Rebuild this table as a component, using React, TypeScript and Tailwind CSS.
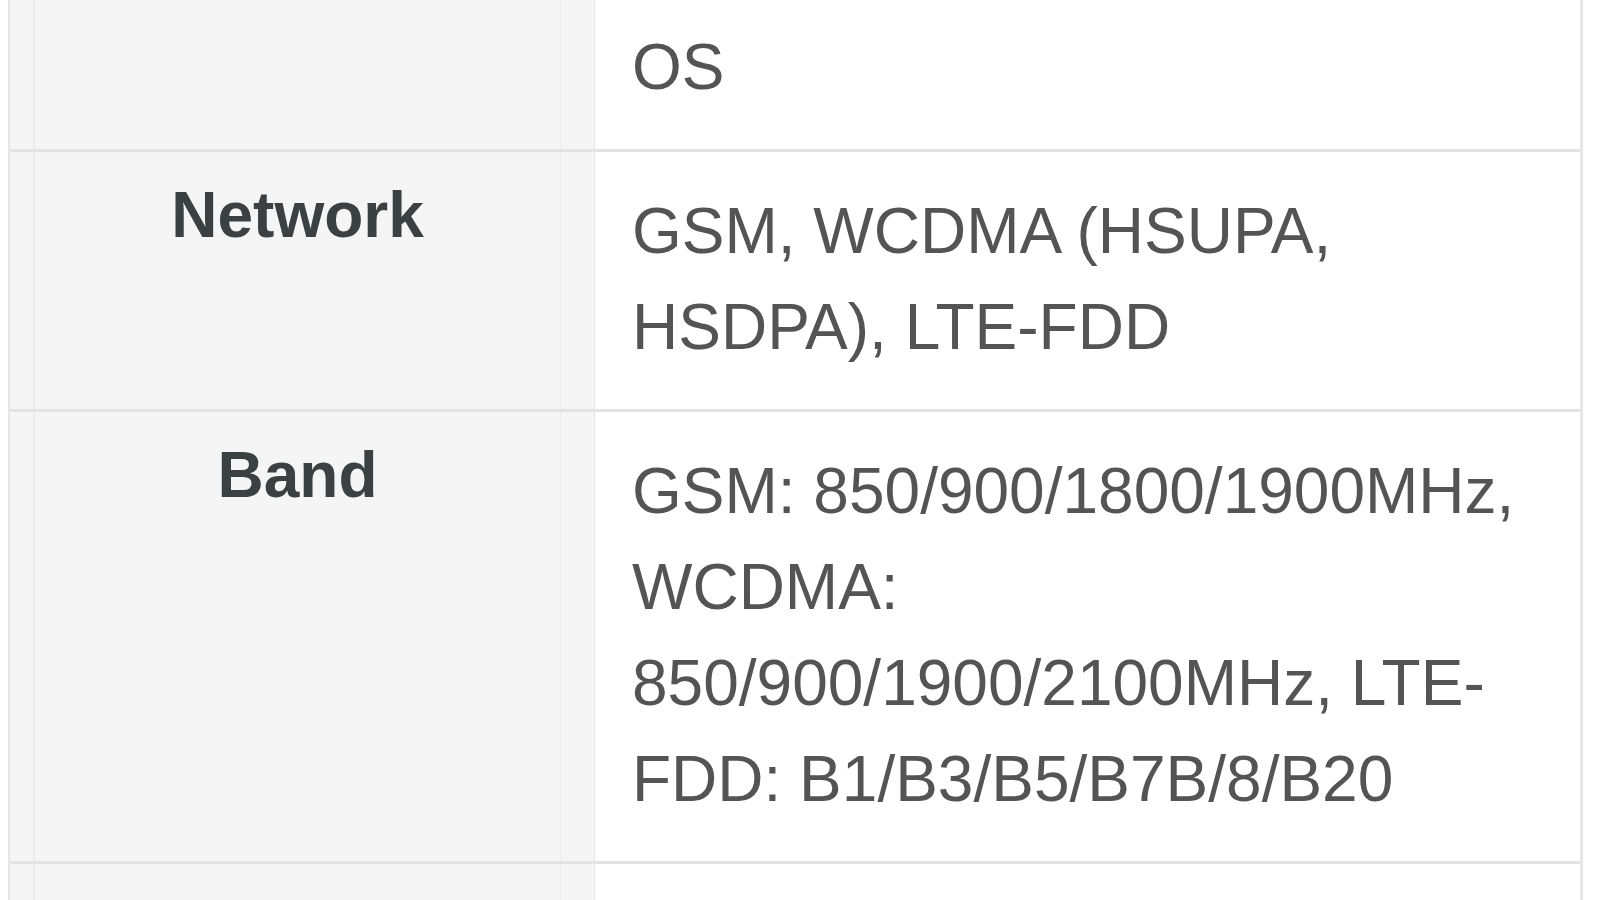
const specs = [
  {
    label: "OS",
    value: "Android 9.0 based on Funtouch OS",
  },
  {
    label: "Network",
    value: "GSM, WCDMA (HSUPA, HSDPA), LTE-FDD",
  },
  {
    label: "Band",
    value:
      "GSM: 850/900/1800/1900MHz, WCDMA: 850/900/1900/2100MHz, LTE-FDD: B1/B3/B5/B7B/8/B20",
  },
  {
    label: "Sensor",
    value: "Fingerprint, Accelerometer, Proximity, Compass",
  },
];

export default function App() {
  return (
    <div className="w-[1600px] h-[900px] overflow-hidden bg-white font-['Liberation_Sans',Arial,sans-serif]">
      <div className="ml-[8px] mt-[-108px] w-[1575px] border-l-2 border-r-[3px] border-[#e6e6e6]">
        {specs.map((row) => (
          <div key={row.label} className="flex border-b-[3px] border-[#e3e3e3]">
            {/* Label column */}
            <div className="flex w-[585px] shrink-0 bg-[#f5f5f5] pl-[23px] border-r border-[#e4e4e4]">
              <div className="flex-1 mr-[33px] border-l-2 border-r border-[#ebebeb] pt-[15px] text-center text-[64px] leading-[96px] font-bold text-[#3b4143]">
                {row.label}
              </div>
            </div>

            {/* Value column */}
            <div className="flex-1 min-w-0 bg-white pl-[37px] pr-[28px] pt-[31px] pb-[34px] text-[64px] leading-[96px] text-[#545454]">
              {row.value}
            </div>
          </div>
        ))}
      </div>
    </div>
  );
}
